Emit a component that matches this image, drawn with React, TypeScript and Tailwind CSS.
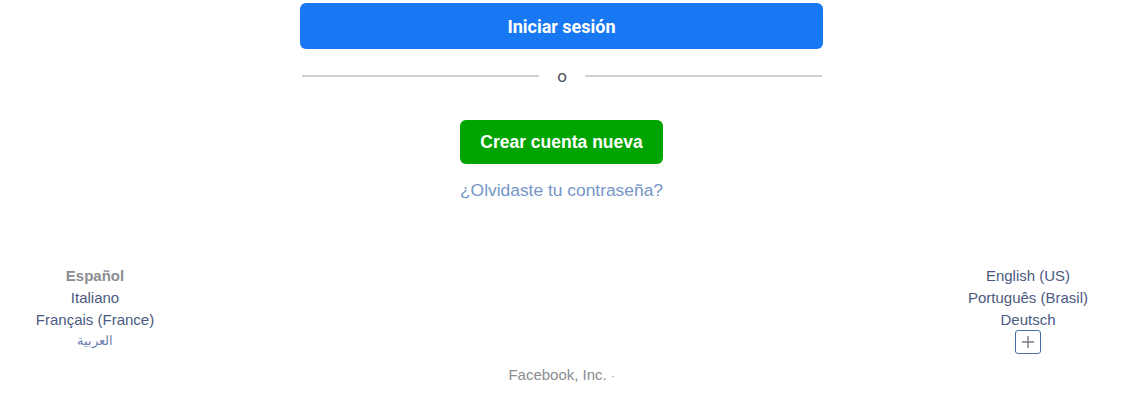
const LEFT_LANGS = ['Italiano', 'Français (France)'];
const RIGHT_LANGS = ['English (US)', 'Português (Brasil)', 'Deutsch'];

const sans = "font-['Liberation_Sans',Arial,sans-serif]";

const PlusIcon = () => (
  <svg width="14" height="14" viewBox="0 0 14 14" fill="none">
    <path d="M7 1v12M1 7h12" stroke="#7a7d82" strokeWidth="1.4" />
  </svg>
);

const App = () => {
  return (
    <div className={`w-[1123px] bg-white h-[402px] ${sans}`}>
      <div className="w-[523px] mx-auto flex flex-col items-center">
        <button className="mt-[3px] h-[46px] w-full rounded-[6px] bg-[#1877f2] text-white text-[18px] font-bold font-['Roboto',sans-serif]">
          Iniciar sesión
        </button>
        <div className="mt-[18px] h-[18px] w-full flex items-center pl-[2px] pr-[1px]">
          <div className="flex-1 h-[2px] bg-[#ccd0d5]" />
          <span className="px-[18px] text-[17px] leading-[18px] text-[#4b4f56] font-['Roboto',sans-serif]">o</span>
          <div className="flex-1 h-[2px] bg-[#ccd0d5]" />
        </div>
        <button className="mt-[35px] h-[44px] w-[203px] rounded-[6px] bg-[#00a400] text-white text-[17.5px] font-bold">
          Crear cuenta nueva
        </button>
        <a href="#" className="mt-[15px] text-[17.4px] leading-[22px] text-[#7596c8]">
          ¿Olvidaste tu contraseña?
        </a>
      </div>

      <div className="mt-[64px] flex justify-between text-[15px] leading-[22px]">
        <div className="w-[190px] flex flex-col items-center">
          <span className="font-bold text-[#8a8d91]">Español</span>
          {LEFT_LANGS.map((l) => (
            <a key={l} href="#" className="text-[#4b5a80]">
              {l}
            </a>
          ))}
          <a href="#" className="text-[13px] leading-[20px] text-[#6b82b0]">
            العربية
          </a>
        </div>
        <div className="w-[190px] flex flex-col items-center">
          {RIGHT_LANGS.map((l) => (
            <a key={l} href="#" className="text-[#4b5a80]">
              {l}
            </a>
          ))}
          <button className="-mt-px w-[26px] h-[24px] rounded-[3px] border border-[#4b6ba6] flex items-center justify-center">
            <PlusIcon />
          </button>
        </div>
      </div>

      <div className="mt-[10px] text-center text-[15px] leading-[22px] text-[#8a8d91]">
        Facebook, Inc. <span className="text-[11px]">·</span>
      </div>
    </div>
  );
};

export default App;
